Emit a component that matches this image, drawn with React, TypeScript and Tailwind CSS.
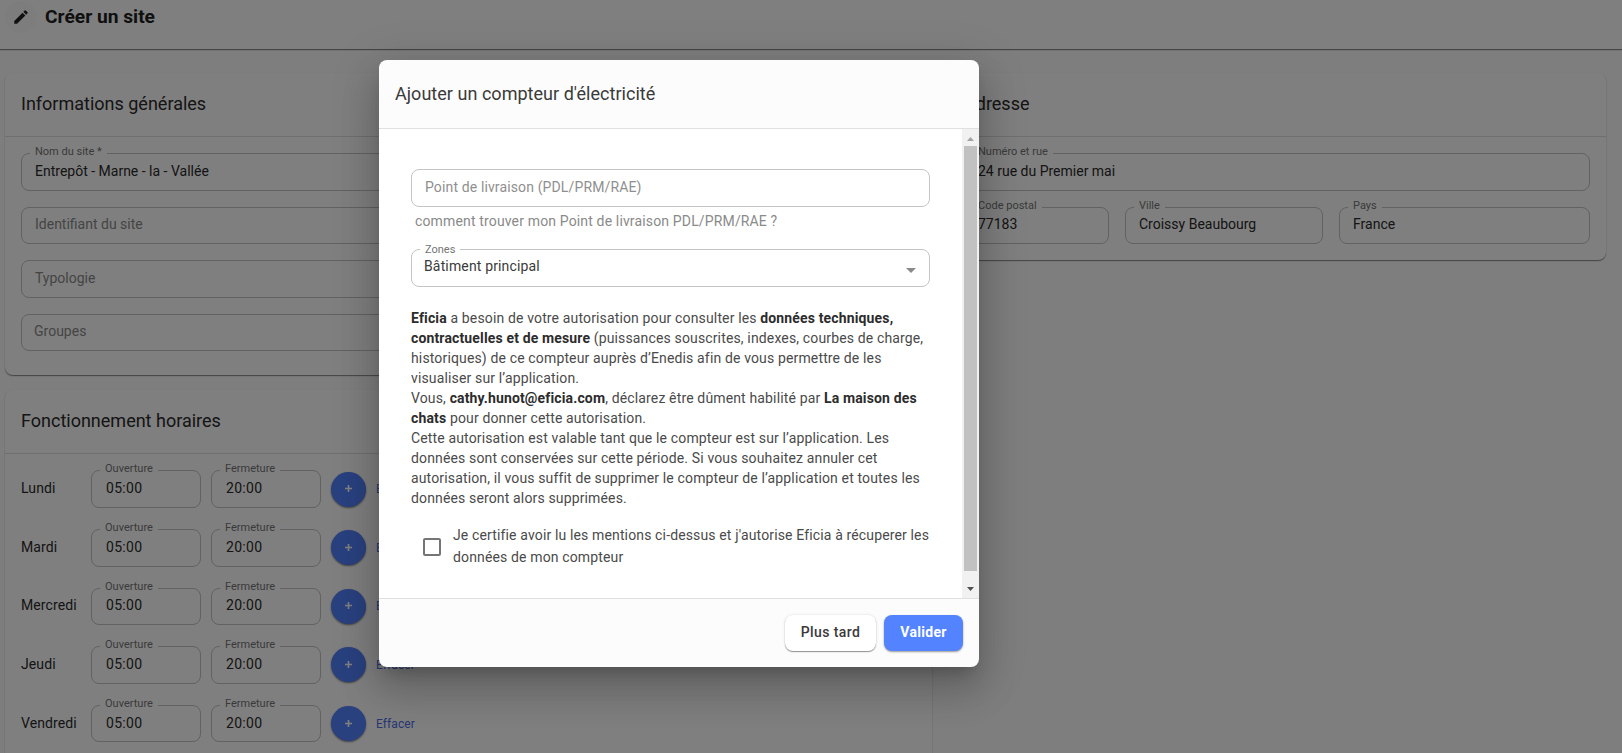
import type { ReactNode } from 'react';
import clsx from 'clsx';

const DAYS = ['Lundi', 'Mardi', 'Mercredi', 'Jeudi', 'Vendredi'];

type FieldProps = {
  label?: string;
  value?: string;
  placeholder?: string;
  className?: string;
  textClass?: string;
};

// Outlined input, the floating label sits over the top border
function Field({ label, value, placeholder, className, textClass }: FieldProps) {
  return (
    <div
      className={clsx(
        'relative flex h-[37.6px] items-center rounded-lg border border-[#c4c4c4] pb-0.5 pl-[13px] text-sm',
        className
      )}
    >
      {label && (
        <span className="absolute -top-2.5 left-2 bg-white px-[5px] text-[11px] leading-4 whitespace-nowrap text-[#757575]">
          {label}
        </span>
      )}
      {value ? (
        <span className={clsx('whitespace-nowrap text-[#2a2a2a]', textClass)}>{value}</span>
      ) : (
        <span className={clsx('whitespace-nowrap text-[#8a8a8a]', textClass)}>{placeholder}</span>
      )}
    </div>
  );
}

function Card({ title, className, children }: { title: string; className?: string; children: ReactNode }) {
  return (
    <section className={clsx('rounded-lg bg-white shadow-[0_1px_1px_rgba(0,0,0,0.4),0_1px_2px_rgba(0,0,0,0.1)]', className)}>
      <h2 className="flex h-16 items-center border-b border-[#dedede] pb-px pl-4 text-lg text-[#2a2a2a]">{title}</h2>
      {children}
    </section>
  );
}

function DayRow({ day }: { day: string }) {
  return (
    <div className="flex h-[37.6px] items-center">
      <span className="w-[70px] pb-0.5 text-sm tracking-[0.1px] text-[#2a2a2a]">{day}</span>
      <Field label="Ouverture" value="05:00" className="w-[110px]" textClass="ml-px tracking-[0.3px]" />
      <Field label="Fermeture" value="20:00" className="ml-2.5 w-[110px]" textClass="ml-px tracking-[0.3px]" />
      <button className="ml-2.5 flex size-[35px] items-center justify-center rounded-full bg-[#5383ff] text-white shadow-[0_1px_2px_rgba(0,0,0,0.5)]">
        <svg className="-mt-px" width="7" height="7" viewBox="0 0 7 7" stroke="currentColor" strokeWidth="1.6">
          <path d="M3.5 0v7M0 3.5h7" />
        </svg>
      </button>
      <a className="ml-2.5 text-xs tracking-[0.1px] text-[#4d6ee8]">Effacer</a>
    </div>
  );
}

function SitePage() {
  return (
    <div className="flex h-full flex-col bg-[#fcfcfc]">
      <header className="flex h-[49px] shrink-0 bg-white pl-[5px] shadow-[0_1px_1px_rgba(0,0,0,0.45)]">
        <div className="mt-px flex size-8 items-center justify-center rounded-full bg-[#fafafd]">
          <svg width="18" height="18" viewBox="0 0 24 24" fill="#212121">
            <path d="M3 17.25V21h3.75L17.81 9.94l-3.75-3.75L3 17.25zM20.71 7.04c.39-.39.39-1.02 0-1.41l-2.34-2.34a.9959.9959 0 0 0-1.41 0l-1.83 1.83 3.75 3.75 1.83-1.83z" />
          </svg>
        </div>
        <h1 className="ml-2 pt-[3px] text-[19.2px] leading-7 font-bold text-[#212121]">Créer un site</h1>
      </header>

      <main className="mt-6 flex items-start gap-4 pl-[5px]">
        <div className="w-[927px] shrink-0">
          <Card title="Informations générales">
            <div className="flex flex-col gap-4 px-4 pt-4 pb-6">
              <Field label="Nom du site *" value="Entrepôt - Marne - la - Vallée" />
              <Field placeholder="Identifiant du site" />
              <Field placeholder="Typologie" />
              <Field placeholder="Groupes" textClass="-ml-px -mt-px" />
            </div>
          </Card>
          <Card title="Fonctionnement horaires" className="mt-[15px]">
            <div className="flex flex-col gap-[21px] px-4 pt-4 pb-6">
              {DAYS.map((day) => (
                <DayRow key={day} day={day} />
              ))}
            </div>
          </Card>
        </div>

        <Card title="Adresse" className="w-[658px] shrink-0">
          <div className="flex flex-col gap-4 p-4">
            <Field label="Numéro et rue" value="24 rue du Premier mai" />
            <div className="flex gap-4">
              <Field label="Code postal" value="77183" className="w-[145px]" />
              <Field label="Ville" value="Croissy Beaubourg" className="w-[198px]" />
              <Field label="Pays" value="France" className="flex-1" />
            </div>
          </div>
        </Card>
      </main>
    </div>
  );
}

function Scrollbar() {
  return (
    <div className="flex w-[17px] shrink-0 flex-col items-center bg-[#f1f1f1]">
      <div className="flex h-[17px] items-center pt-0.5">
        <svg width="7" height="4" viewBox="0 0 7 4" fill="#a3a3a3">
          <path d="M0 4L3.5 0 7 4z" />
        </svg>
      </div>
      <div className="w-[13px] flex-1 bg-[#c1c1c1]" />
      <div className="flex h-[27px] items-end pb-[7px]">
        <svg width="7" height="4" viewBox="0 0 7 4" fill="#505050">
          <path d="M0 0L3.5 4 7 0z" />
        </svg>
      </div>
    </div>
  );
}

function MeterDialog() {
  return (
    <div
      role="dialog"
      className="flex h-[607px] w-[600px] flex-col overflow-hidden rounded-lg bg-[#fcfcfc] shadow-[0_11px_15px_-7px_rgba(0,0,0,0.2),0_24px_38px_3px_rgba(0,0,0,0.14),0_9px_46px_8px_rgba(0,0,0,0.12)]"
    >
      <h2 className="flex h-[69px] shrink-0 items-center border-b border-[#e0e0e0] pl-4 text-lg tracking-[0.03px] text-[#3a3a3a]">
        Ajouter un compteur d'électricité
      </h2>

      <div className="flex min-h-0 flex-1 bg-white">
        <div className="min-w-0 flex-1 px-8 pt-10 text-sm text-[#4a4a4a]">
          <div className="flex h-[37.6px] items-center rounded-lg border border-[#c4c4c4] pb-0.5 pl-[13px] tracking-[0.13px] text-[#8f8f8f]">
            Point de livraison (PDL/PRM/RAE)
          </div>
          <p className="mt-1 ml-1 leading-5 tracking-[0.15px] text-[#8a8a8a]">
            comment trouver mon Point de livraison PDL/PRM/RAE ?
          </p>
          <div className="relative mt-[18.6px] flex h-[37.6px] items-center justify-between rounded-lg border border-[#c4c4c4] pr-3 pl-3">
            <span className="absolute -top-2 left-2 bg-white px-[5px] text-[11px] leading-4 text-[#757575]">
              Zones
            </span>
            <span className="-mt-1 tracking-[0.15px] text-[#3a3a3a]">Bâtiment principal</span>
            <svg className="mt-1.5 mr-px" width="10" height="5" viewBox="0 0 10 5" fill="#8a8a8a">
              <path d="M0 0L5 5 10 0z" />
            </svg>
          </div>

          <div className="mt-[21.2px] leading-5 tracking-[0.145px] whitespace-nowrap [&_b]:font-bold [&_b]:text-[#2c2c2c]">
            <p>
              <b>Eficia</b> a besoin de votre autorisation pour consulter les <b>données techniques,</b>
              <br />
              <b>contractuelles et de mesure</b> (puissances souscrites, indexes, courbes de charge,
              <br />
              historiques) de ce compteur auprès d’Enedis afin de vous permettre de les
              <br />
              visualiser sur l’application.
            </p>
            <p>
              Vous, <b>cathy.hunot@eficia.com</b>, déclarez être dûment habilité par <b>La maison des</b>
              <br />
              <b>chats</b> pour donner cette autorisation.
            </p>
            <p>
              Cette autorisation est valable tant que le compteur est sur l’application. Les
              <br />
              données sont conservées sur cette période. Si vous souhaitez annuler cet
              <br />
              autorisation, il vous suffit de supprimer le compteur de l’application et toutes les
              <br />
              données seront alors supprimées.
            </p>
          </div>

          <label className="mt-4 flex items-center">
            <span className="mt-0.5 ml-3 size-[18px] shrink-0 rounded-xs border-2 border-[#757575]" />
            <span className="ml-3 leading-[22px] tracking-[0.14px] whitespace-nowrap">
              Je certifie avoir lu les mentions ci-dessus et j'autorise Eficia à récuperer les
              <br />
              données de mon compteur
            </span>
          </label>
        </div>
        <Scrollbar />
      </div>

      <div className="flex h-[69px] shrink-0 items-start justify-end gap-2 border-t border-[#e0e0e0] pt-4 pr-4 text-sm">
        <button className="h-9 w-[91px] rounded-lg bg-white pb-0.5 font-medium tracking-[0.4px] text-[#3a3a3a] shadow-[0_1px_1px_rgba(0,0,0,0.4),0_0_3px_rgba(0,0,0,0.12)]">
          Plus tard
        </button>
        <button className="h-9 w-[79px] rounded-lg bg-[#5383ff] pb-0.5 font-bold tracking-[0.3px] text-white shadow-[0_1px_2px_rgba(0,0,0,0.4)]">
          Valider
        </button>
      </div>
    </div>
  );
}

export default function App() {
  return (
    <div className="relative h-[753px] w-[1622px] overflow-hidden font-[Roboto,sans-serif]">
      <SitePage />
      <div className="absolute inset-0 flex items-start bg-black/50 pt-[60px] pl-[379px]">
        <MeterDialog />
      </div>
    </div>
  );
}
